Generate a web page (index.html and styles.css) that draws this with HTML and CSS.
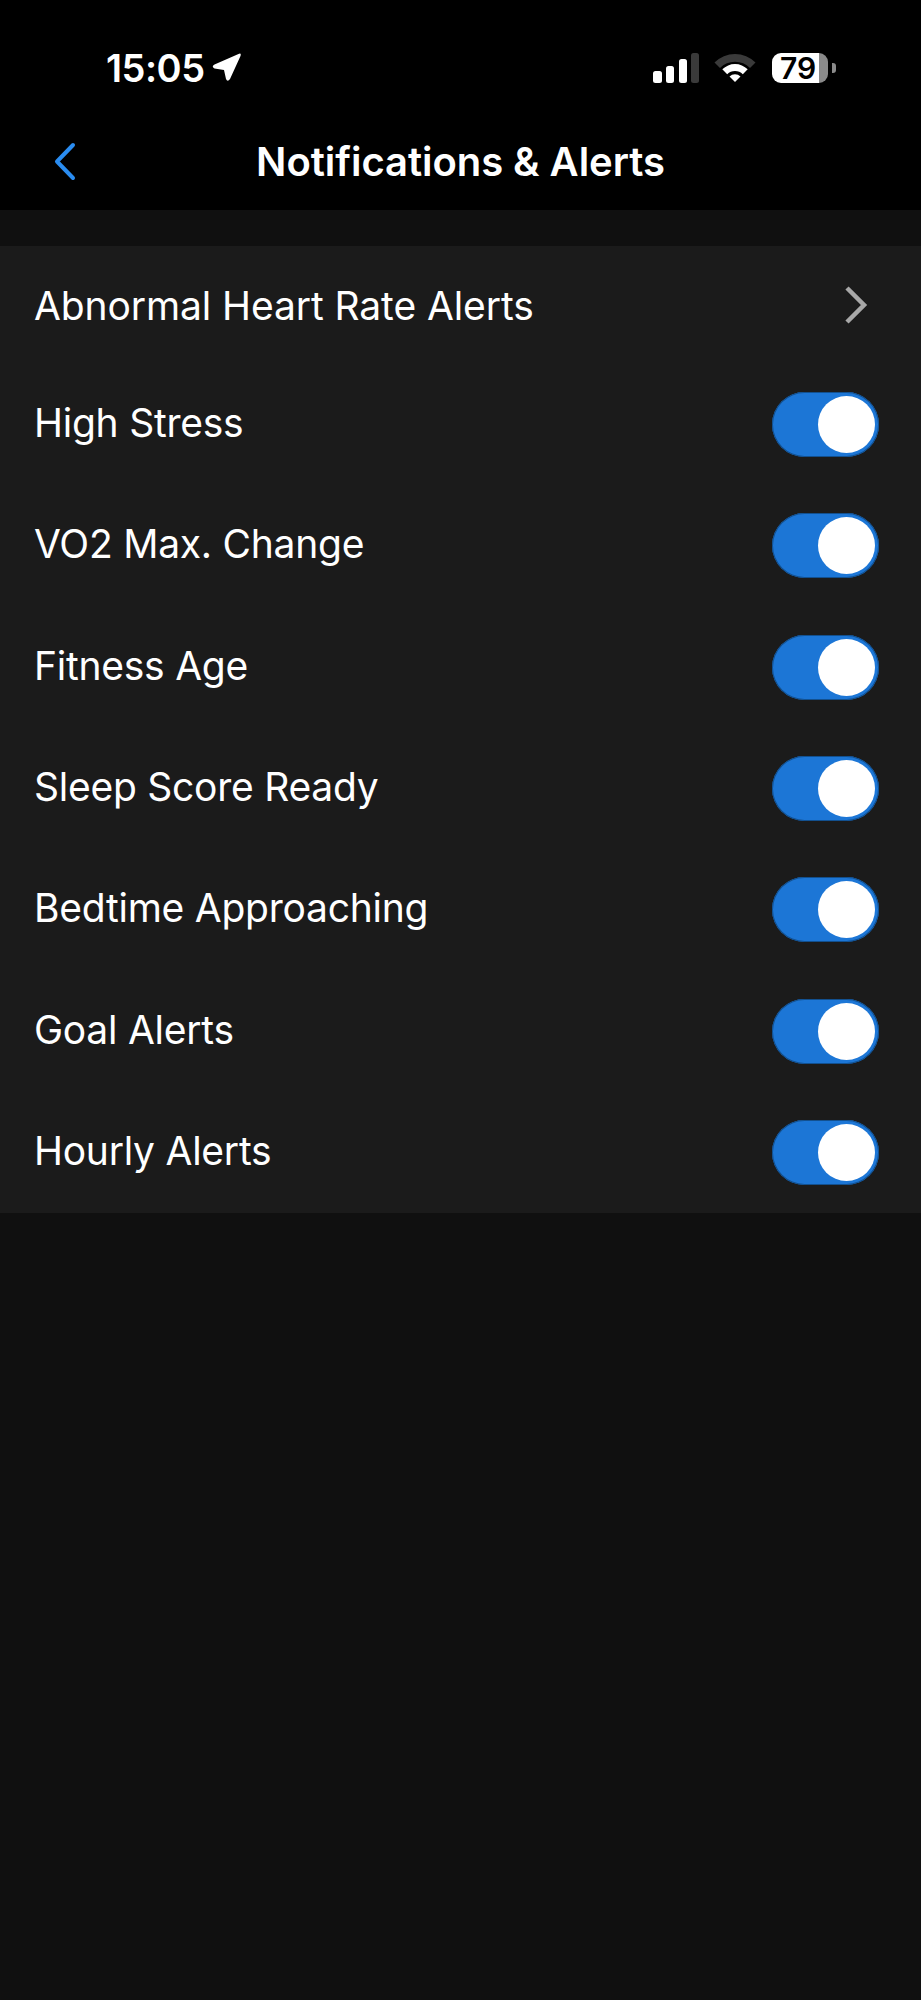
FILE: index.html
```html
<!DOCTYPE html>
<html lang="en">

<head>
    <meta charset="UTF-8">
    <title>Notifications &amp; Alerts</title>
    <link rel="stylesheet" href="styles.css">
</head>

<body>

    <header class="top">
        <div class="status">
            <div class="status-left">
                <span class="time">15:05</span>
                <svg class="arrow" width="30" height="30" viewBox="0 0 30 30">
                    <path d="M26.500 1 Q29.500 -0.500 28.500 3 L18 26 Q15.500 29.500 14 26 L12 17 L2.500 15.500 Q-1 13.500 2.500 11.500 Z" fill="#fff" />
                </svg>
            </div>
            <div class="status-right">
                <svg width="46" height="30" viewBox="0 0 46 30">
                    <rect x="0" y="18" width="9" height="12" rx="2.5" fill="#fff" />
                    <rect x="13" y="13" width="8" height="17" rx="2.500" fill="#fff" />
                    <rect x="26" y="6" width="8" height="24" rx="2.500" fill="#fff" />
                    <rect x="38" y="0" width="8" height="30" rx="2.500" fill="#3a3a3a" />
                </svg>
                <svg class="wifi" width="42" height="30" viewBox="0 0 42 30">
                    <path d="M0.500 9.500 A29 29 0 0 1 41.500 9.500 L36 15 A21 21 0 0 0 6 15 Z" fill="#3a3a3a" />
                    <path d="M8.300 16.300 A18 18 0 0 1 33.700 16.300 L28.800 21.200 A11 11 0 0 0 13.200 21.200 Z" fill="#fff" />
                    <path d="M15.500 23.500 A7.800 7.800 0 0 1 26.500 23.500 L21 29 Z" fill="#fff" />
                </svg>
                <div class="battery">
                    <div class="battery-body"><span class="battery-level">79</span></div>
                    <div class="battery-nub"></div>
                </div>
            </div>
        </div>
        <nav class="nav">
            <svg class="back" width="24" height="40" viewBox="0 0 24 40">
                <path d="M20 3 L4 19.500 L20 36" fill="none" stroke="#2a8cf0" stroke-width="4" stroke-linecap="round" stroke-linejoin="round" />
            </svg>
            <h1>Notifications &amp; Alerts</h1>
        </nav>
    </header>

    <ul class="list">
        <li class="row row-first">
            <span class="label">Abnormal Heart Rate Alerts</span>
            <svg class="more" width="24" height="38" viewBox="0 0 24 38">
                <path d="M3 2 L20 19 L3 36" fill="none" stroke="#a8a8a8" stroke-width="4.500" />
            </svg>
        </li>
        <li class="row"><span class="label">High Stress</span><span class="toggle"></span></li>
        <li class="row"><span class="label">VO2 Max. Change</span><span class="toggle"></span></li>
        <li class="row"><span class="label">Fitness Age</span><span class="toggle"></span></li>
        <li class="row"><span class="label">Sleep Score Ready</span><span class="toggle"></span></li>
        <li class="row"><span class="label">Bedtime Approaching</span><span class="toggle"></span></li>
        <li class="row"><span class="label">Goal Alerts</span><span class="toggle"></span></li>
        <li class="row"><span class="label">Hourly Alerts</span><span class="toggle"></span></li>
    </ul>

</body>

</html>
```

FILE: styles.css
```css
* {
    box-sizing: border-box;
}

body {
    font-family: 'Inter', 'Liberation Sans', sans-serif;
    background-color: #101010;
    color: #fff;
    margin: 0;
    min-height: 100vh;
}

.top {
    background: #000;
    height: 210px;
}

.status {
    display: flex;
    justify-content: space-between;
    align-items: center;
    height: 135px;
    padding: 0 85px 0 106px;
}

.status-left {
    display: flex;
    align-items: center;
    gap: 7px;
}

.time {
    font-size: 38px;
    font-weight: 600;
    letter-spacing: -0.5px;
}

.status-right {
    display: flex;
    align-items: center;
    gap: 15px;
}

.battery {
    display: flex;
    align-items: center;
    gap: 4px;
    margin-left: 1px;
}

.battery-body {
    width: 56px;
    height: 30px;
    border-radius: 9px;
    background: linear-gradient(to right, #fff 84%, #8a8a8a 84%);
    color: #000;
    text-align: center;
}

.battery-level {
    display: block;
    font-size: 30px;
    font-weight: 600;
    line-height: 30px;
    padding-right: 4px;
}

.battery-nub {
    width: 4px;
    height: 10px;
    border-radius: 0 3px 3px 0;
    background: #8a8a8a;
}

.nav {
    position: relative;
    height: 52px;
    display: flex;
    align-items: center;
    justify-content: center;
}

.nav h1 {
    margin: 0;
    font-size: 40px;
    font-weight: 600;
    letter-spacing: -0.05px;
}

.back {
    position: absolute;
    left: 53px;
    top: 7px;
}

.list {
    list-style: none;
    margin: 36px 0 0;
    padding: 0;
    background: #1b1b1b;
}

.row {
    display: flex;
    justify-content: space-between;
    align-items: center;
    height: 121.33px;
    padding: 0 42px 0 34px;
    font-size: 39px;
    letter-spacing: -0.25px;
}

.row .label {
    margin-bottom: 4px;
}

.row-first {
    height: 118px;
    padding-right: 53px;
    letter-spacing: -0.1px;
}

.row-first .label {
    margin-bottom: 0;
}

.toggle {
    position: relative;
    width: 107px;
    height: 65px;
    border-radius: 33px;
    background: #1c76d6;
    box-shadow: inset 0 0 0 1px #12508f;
}

.toggle::after {
    content: "";
    position: absolute;
    right: 4px;
    top: 4px;
    width: 57px;
    height: 57px;
    border-radius: 50%;
    background: #fff;
}
```
